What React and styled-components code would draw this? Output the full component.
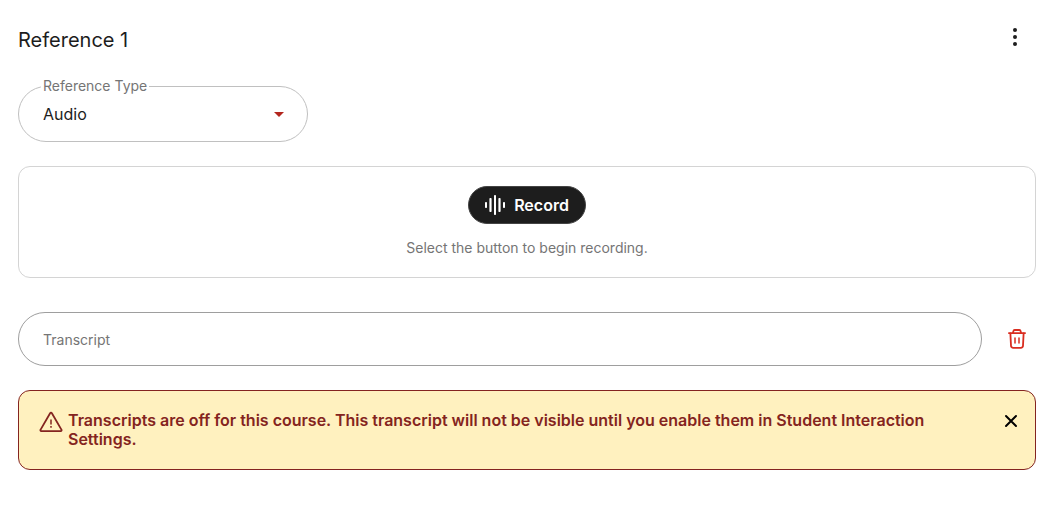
import React, { useState } from 'react'
import styled, { createGlobalStyle } from 'styled-components'

const GlobalStyle = createGlobalStyle`
  * {
    box-sizing: border-box;
  }

  body {
    margin: 0;
    background: #fff;
    color: #1d1d1d;
    font-family: Inter, sans-serif;
  }
`

const Page = styled.main`
  display: flex;
  flex-direction: column;
  gap: 24px;
  padding: 18px 19px 24px 18px;
`

const Header = styled.header`
  display: flex;
  justify-content: space-between;
  align-items: flex-start;
  height: 44px;
  padding-right: 2px;
`

const Title = styled.h2`
  margin: 0;
  font-size: 20px;
  font-weight: 400;
  line-height: 44px;
`

const IconButton = styled.button`
  display: flex;
  align-items: center;
  justify-content: center;
  flex-shrink: 0;
  width: ${({ $size }) => $size}px;
  height: ${({ $size }) => $size}px;
  padding: 0;
  border: none;
  background: none;
  color: ${({ $color }) => $color || '#1d1d1d'};
  cursor: pointer;
`

const SelectField = styled.div`
  position: relative;
  width: 290px;
`

const SelectLabel = styled.label`
  position: absolute;
  top: -8px;
  left: 23px;
  padding: 0 2px;
  background: #fff;
  color: #757575;
  font-size: 14px;
  line-height: 16px;
`

const Select = styled.select`
  display: block;
  width: 100%;
  height: 56px;
  padding: 0 48px 0 24px;
  appearance: none;
  border: 1px solid #c0c0c0;
  border-radius: 28px;
  background: #fff;
  color: #1d1d1d;
  font-family: inherit;
  font-size: 16px;
  cursor: pointer;
`

const Arrow = styled.svg`
  position: absolute;
  top: 26px;
  right: 24px;
  pointer-events: none;
`

const RecordCard = styled.section`
  display: flex;
  flex-direction: column;
  align-items: center;
  gap: 16px;
  padding: 19px 20px 21px;
  border: 1px solid #d4d4d4;
  border-radius: 12px;
`

const RecordButton = styled.button`
  display: flex;
  align-items: center;
  gap: 8px;
  height: 38px;
  padding: 0 16px;
  border: 1px solid #444;
  border-radius: 19px;
  background: #1d1d1d;
  color: #fff;
  font-family: inherit;
  font-size: 16px;
  font-weight: 600;
  cursor: pointer;
`

const Hint = styled.p`
  margin: 0;
  color: #757575;
  font-size: 14px;
  line-height: 16px;
`

const TranscriptRow = styled.div`
  display: flex;
  align-items: center;
  gap: 16px;
  padding-top: 10px;
`

const TranscriptInput = styled.input`
  flex: 1;
  min-width: 0;
  height: 54px;
  padding: 0 24px;
  border: 1px solid #9e9e9e;
  border-radius: 27px;
  background: #fff;
  color: #1d1d1d;
  font-family: inherit;
  font-size: 14px;

  &::placeholder {
    color: #757575;
    opacity: 1;
  }
`

const Alert = styled.div`
  display: flex;
  align-items: flex-start;
  gap: 5px;
  padding: 20px 14px 20px 20px;
  border: 1px solid #842420;
  border-radius: 12px;
  background: #fff1bf;
  color: #842420;

  > svg {
    flex-shrink: 0;
  }
`

const AlertText = styled.p`
  flex: 1;
  margin: 0;
  padding-right: 48px;
  font-size: 16px;
  font-weight: 600;
  line-height: 19px;
`

const DotsIcon = () => (
  <svg width="24" height="24" viewBox="0 0 24 24" fill="currentColor" aria-hidden="true">
    <circle cx="12" cy="5" r="2" />
    <circle cx="12" cy="12" r="2" />
    <circle cx="12" cy="19" r="2" />
  </svg>
)

const WaveIcon = () => (
  <svg width="21" height="20" viewBox="0 0 21 20" fill="currentColor" aria-hidden="true">
    <rect x="0" y="7" width="2" height="6" rx="0.8" />
    <rect x="4.4" y="3" width="2.2" height="14" rx="0.8" />
    <rect x="9" y="0" width="2" height="20" rx="0.8" />
    <rect x="13.4" y="3" width="2.2" height="14" rx="0.8" />
    <rect x="18" y="7" width="2" height="6" rx="0.8" />
  </svg>
)

const TrashIcon = () => (
  <svg width="20" height="22" viewBox="0 0 20 22" fill="none" stroke="currentColor" strokeWidth="1.8" strokeLinecap="round" strokeLinejoin="round" aria-hidden="true">
    <path d="M1.9 5.1h16.2" />
    <path d="M6 4.8l.4-1.7a1.3 1.3 0 0 1 1.3-1.1h4.6a1.3 1.3 0 0 1 1.3 1.1l.4 1.7" />
    <path d="M3.4 5.3v.4l.6 11.9a2.2 2.2 0 0 0 2.2 2.3h7.6a2.2 2.2 0 0 0 2.2-2.3l.6-11.9v-.4" />
    <path d="M8 10v5M12 10v5" strokeWidth="1.5" />
  </svg>
)

const WarningIcon = () => (
  <svg width="24" height="22" viewBox="0 0 24 22" fill="none" stroke="currentColor" strokeWidth="1.8" strokeLinejoin="round" aria-hidden="true">
    <path d="M11.1 2.2a1 1 0 0 1 1.8 0l9.5 16.4a.9.9 0 0 1-.8 1.5H2.4a.9.9 0 0 1-.8-1.5z" />
    <path d="M12 8.4v5.2M12 15v1.8" strokeWidth="1.5" />
  </svg>
)

const CloseIcon = () => (
  <svg width="14" height="14" viewBox="0 0 14 14" fill="none" stroke="currentColor" strokeWidth="2" strokeLinecap="round" aria-hidden="true">
    <path d="M2 2l10 10M12 2L2 12" />
  </svg>
)

const App = () => {
  const [type, setType] = useState('audio')
  const [transcript, setTranscript] = useState('')
  const [showAlert, setShowAlert] = useState(true)

  return (
    <>
      <GlobalStyle />
      <Page>
        <Header>
          <Title>Reference 1</Title>
          <IconButton $size={38} aria-label="More options">
            <DotsIcon />
          </IconButton>
        </Header>

        <SelectField>
          <Select id="reference-type" value={type} onChange={(e) => setType(e.target.value)}>
            <option value="audio">Audio</option>
          </Select>
          <SelectLabel htmlFor="reference-type">Reference Type</SelectLabel>
          <Arrow width="10" height="5" viewBox="0 0 10 5" aria-hidden="true">
            <path d="M0 0h10L5 5z" fill="#b3261e" />
          </Arrow>
        </SelectField>

        <RecordCard>
          <RecordButton>
            <WaveIcon />
            Record
          </RecordButton>
          <Hint>Select the button to begin recording.</Hint>
        </RecordCard>

        <TranscriptRow>
          <TranscriptInput
            aria-label="Transcript"
            placeholder="Transcript"
            value={transcript}
            onChange={(e) => setTranscript(e.target.value)}
          />
          <IconButton $size={38} $color="#d92d20" aria-label="Delete transcript" onClick={() => setTranscript('')}>
            <TrashIcon />
          </IconButton>
        </TranscriptRow>

        {showAlert && (
          <Alert role="alert">
            <WarningIcon />
            <AlertText>
              Transcripts are off for this course. This transcript will not be visible until you enable them in
              Student Interaction Settings.
            </AlertText>
            <IconButton $size={20} $color="#000" aria-label="Dismiss" onClick={() => setShowAlert(false)}>
              <CloseIcon />
            </IconButton>
          </Alert>
        )}
      </Page>
    </>
  )
}

export default App
